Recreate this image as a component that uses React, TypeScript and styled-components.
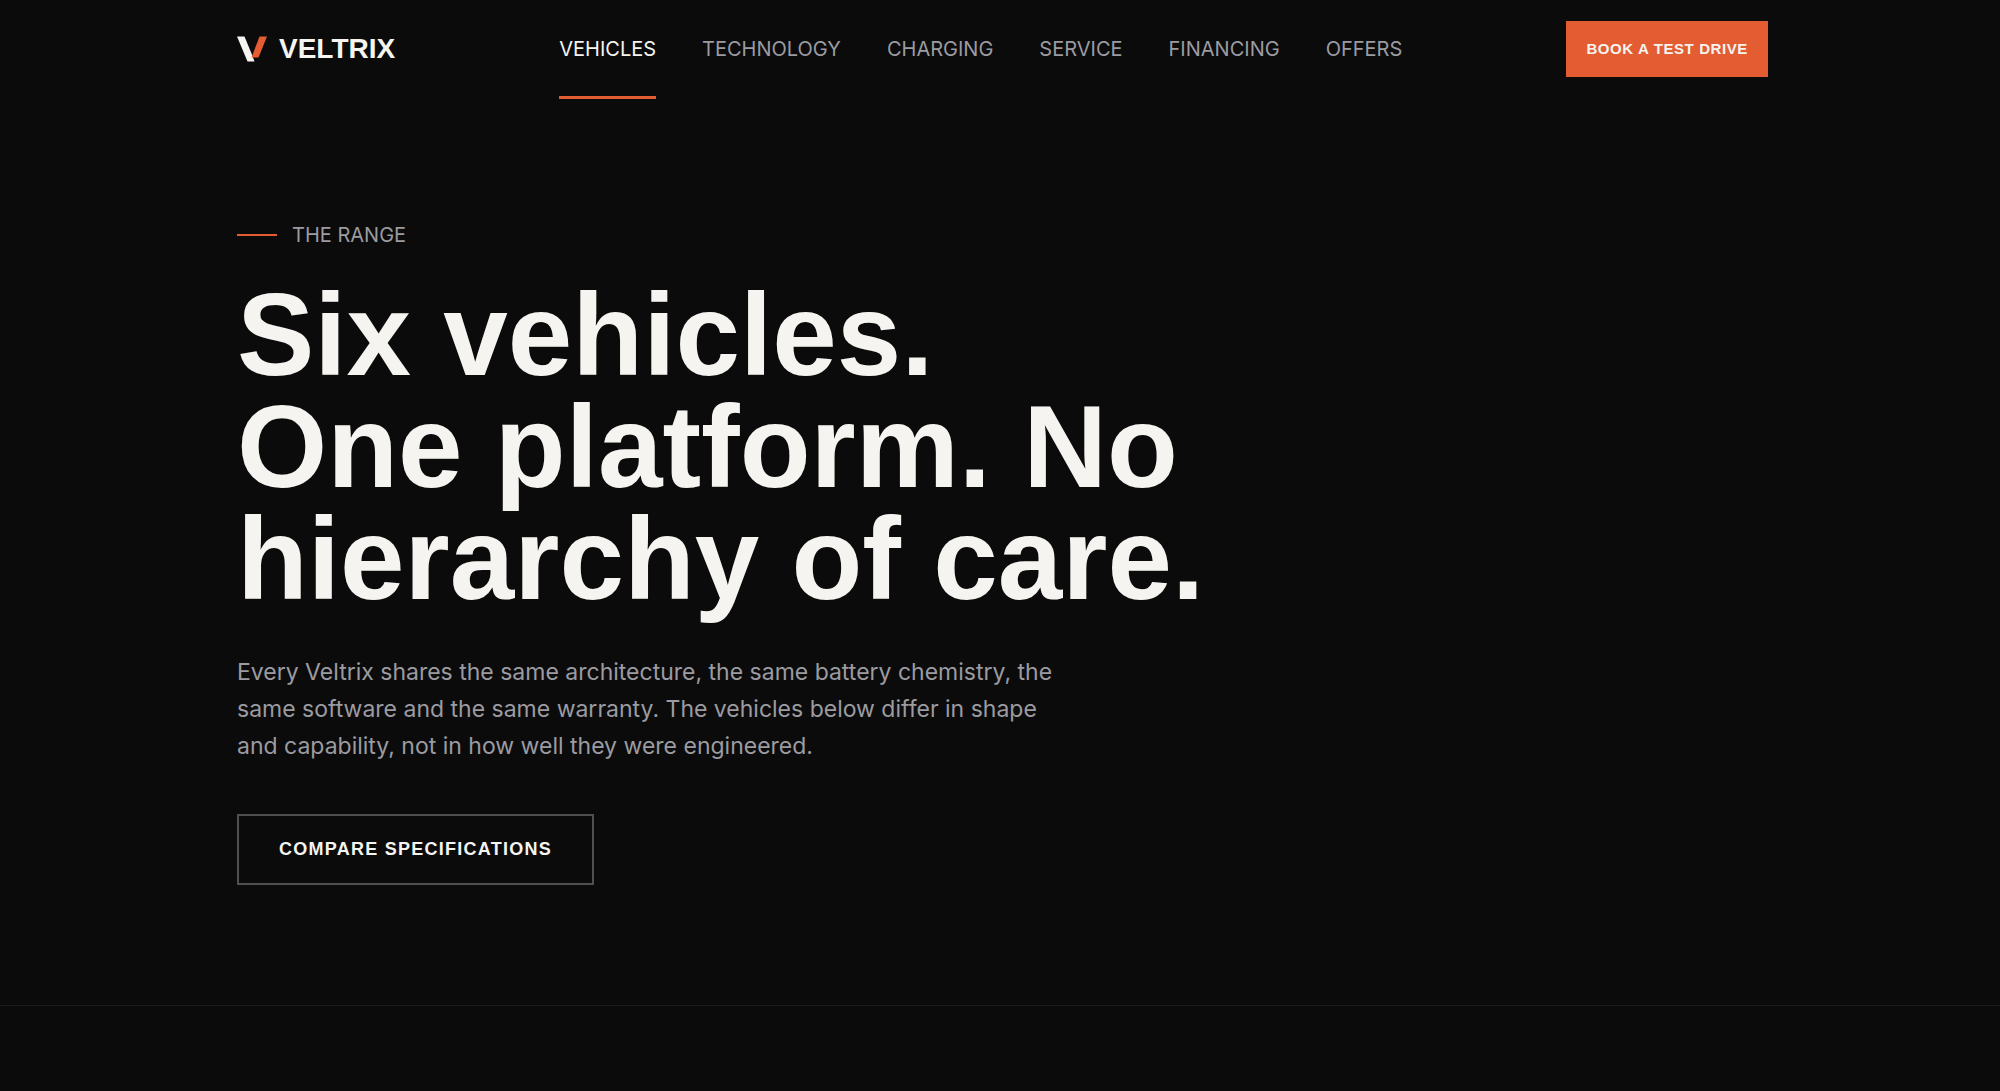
import React from "react";
import styled, { createGlobalStyle, css } from "styled-components";

const color = {
  ink: "#0b0b0b",
  paper: "#f5f4f0",
  muted: "#9b9ba1",
  accent: "#e35c32",
  outline: "#505050",
  rule: "#1b1b1b",
};

const display = `"Liberation Sans", Arial, sans-serif`;
const body = `Inter, "Liberation Sans", sans-serif`;

const GlobalStyle = createGlobalStyle`
  *, *::before, *::after { box-sizing: border-box; }
  body {
    margin: 0;
    background: ${color.ink};
    color: ${color.paper};
    font-family: ${body};
  }
`;

const Container = styled.div`
  width: 100%;
  max-width: 1536px;
  margin: 0 auto;
  padding-left: 5px;
`;

const HeaderBar = styled(Container)`
  display: flex;
  align-items: center;
  justify-content: space-between;
  height: 98px;
`;

const Brand = styled.a`
  display: flex;
  align-items: center;
  gap: 12px;
  color: ${color.paper};
  font: bold 28px/32px ${display};
  text-decoration: none;
`;

const Nav = styled.nav`
  align-self: stretch;
`;

const NavList = styled.ul`
  display: flex;
  gap: 46px;
  height: 100%;
  margin: 0;
  padding: 0;
  list-style: none;
`;

const NavLink = styled.a<{ $active?: boolean }>`
  position: relative;
  display: flex;
  align-items: center;
  height: 100%;
  color: ${(p) => (p.$active ? color.paper : color.muted)};
  font-size: 20px;
  line-height: 32px;
  text-decoration: none;
  text-transform: uppercase;

  &::after {
    content: "";
    position: absolute;
    right: 0;
    bottom: -1px;
    left: 0;
    height: 3px;
    background: ${(p) => (p.$active ? color.accent : "transparent")};
  }
`;

const solid = css`
  padding: 12px 20px;
  border: 0;
  background: ${color.accent};
  font: bold 15px/32px ${display};
  letter-spacing: 0.04em;
`;

const outlined = css`
  padding: 18px 40px;
  border: 2px solid ${color.outline};
  background: transparent;
  font: bold 18px/31px ${display};
  letter-spacing: 0.07em;
`;

const Button = styled.button<{ $outline?: boolean }>`
  border-radius: 0;
  color: ${color.paper};
  text-transform: uppercase;
  cursor: pointer;
  ${(p) => (p.$outline ? outlined : solid)}
`;

const Hero = styled.section`
  padding: 121px 0 120px;
  border-bottom: 1px solid ${color.rule};
`;

const HeroContent = styled(Container)`
  display: flex;
  flex-direction: column;
  align-items: flex-start;
`;

const Eyebrow = styled.p`
  display: flex;
  align-items: center;
  gap: 15px;
  margin: 0;
  color: ${color.muted};
  font-size: 20px;
  line-height: 32px;
  text-transform: uppercase;

  &::before {
    content: "";
    width: 40px;
    height: 2px;
    background: ${color.accent};
  }
`;

const Title = styled.h1`
  max-width: 1040px;
  margin: 28px 0 39px;
  font: bold 116px/112px ${display};
`;

const Lead = styled.p`
  max-width: 820px;
  margin: 0 0 49px;
  color: ${color.muted};
  font-size: 23px;
  line-height: 37px;
`;

const links = ["Vehicles", "Technology", "Charging", "Service", "Financing", "Offers"];

function Mark() {
  return (
    <svg width="30" height="26" viewBox="0 0 30 26" aria-hidden="true">
      <path d="M0 0.5H7.500L14.500 17.500L17.500 25.500H10.500Z" fill={color.paper} />
      <path d="M22.500 0.500H30L21.500 21.500H14.500Z" fill={color.accent} />
    </svg>
  );
}

export default function App() {
  return (
    <>
      <GlobalStyle />
      <header>
        <HeaderBar>
          <Brand href="#home">
            <Mark />
            VELTRIX
          </Brand>
          <Nav aria-label="Main">
            <NavList>
              {links.map((label, i) => (
                <li key={label}>
                  <NavLink href={`#${label.toLowerCase()}`} $active={i === 0} aria-current={i === 0 ? "page" : undefined}>
                    {label}
                  </NavLink>
                </li>
              ))}
            </NavList>
          </Nav>
          <Button type="button">Book a test drive</Button>
        </HeaderBar>
      </header>
      <main>
        <Hero>
          <HeroContent>
            <Eyebrow>The range</Eyebrow>
            <Title>
              Six vehicles.
              <br />
              One platform. No hierarchy of care.
            </Title>
            <Lead>
              Every Veltrix shares the same architecture, the same battery chemistry, the same software and the same
              warranty. The vehicles below differ in shape and capability, not in how well they were engineered.
            </Lead>
            <Button type="button" $outline>
              Compare specifications
            </Button>
          </HeroContent>
        </Hero>
      </main>
    </>
  );
}
